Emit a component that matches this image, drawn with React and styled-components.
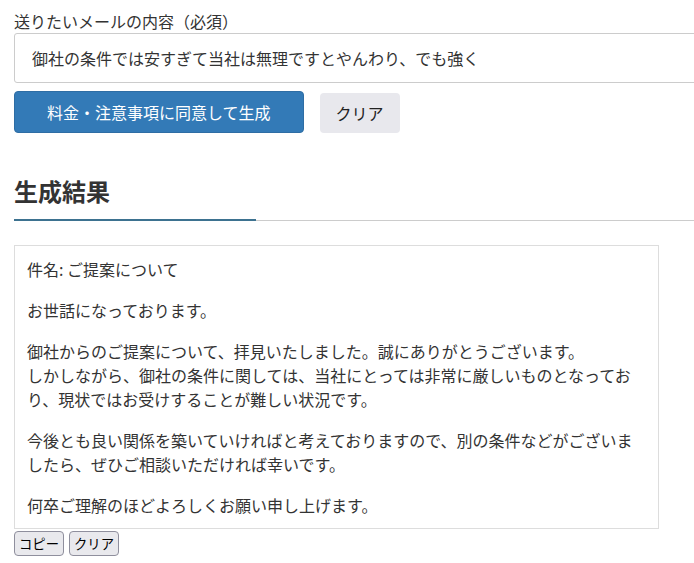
import React, { useState } from 'react'
import styled, { createGlobalStyle } from 'styled-components';

const GlobalStyle = createGlobalStyle`
    html, body {
        margin: 0;
        padding: 0;
        background: #fff;
        overflow: hidden;
    }

    body {
        font-family: "Noto Sans CJK JP", "Liberation Sans", sans-serif;
        color: #333;
        font-size: 16px;
    }
`;

const PageStyled = styled.div`
    padding: 9px 0 0 14px;
    width: 720px;
`;

const LabelStyled = styled.label`
    display: block;
    font-size: 16px;
    line-height: 24px;
`;

const InputStyled = styled.input`
    display: block;
    box-sizing: border-box;
    width: 100%;
    height: 50px;
    margin: 0;
    padding: 0 17px;
    border: 1px solid #ccc;
    border-radius: 3px;
    font-family: inherit;
    font-size: 16px;
    color: #333;
    outline: none;
`;

const ButtonRowStyled = styled.div`
    display: flex;
    align-items: flex-end;
    gap: 16px;
    margin-top: 8px;
`;

const ActionButton = styled.button`
    box-sizing: border-box;
    height: ${props => props.$primary ? '42px' : '40px'};
    padding: 0 ${props => props.$primary ? '32px' : '16px'};
    border: ${props => props.$primary ? '1px solid #2e6da4' : 'none'};
    border-radius: 4px;
    background: ${props => props.$primary ? '#337ab7' : '#e8e8ed'};
    color: ${props => props.$primary ? '#fff' : '#222'};
    font-family: inherit;
    font-size: 16px;
    cursor: pointer;
`;

const HeadingStyled = styled.h2`
    position: relative;
    margin: 40px 0 0;
    padding-bottom: 11px;
    border-bottom: 1px solid #ccc;
    font-size: 24px;
    font-weight: bold;
    line-height: 36px;
    color: #333;

    &::after {
        content: '';
        position: absolute;
        left: 0;
        bottom: -1px;
        width: 242px;
        height: 2px;
        background: #3d7290;
    }
`;

const ResultBoxStyled = styled.div`
    box-sizing: border-box;
    width: 645px;
    margin-top: 24px;
    padding: 11px 12px;
    border: 1px solid #ddd;
    font-size: 16px;
    line-height: 24px;
    color: #333;

    p {
        margin: 0 0 17px;
    }

    p:last-child {
        margin-bottom: 0;
    }
`;

const SmallButtonRowStyled = styled.div`
    display: flex;
    gap: 5px;
    margin-top: 2px;
`;

const SmallButton = styled.button`
    box-sizing: border-box;
    height: 25px;
    padding: 0 4px;
    border: 1px solid #8f8f9d;
    border-radius: 4px;
    background: #e9e9ed;
    color: #000;
    font-family: inherit;
    font-size: 13.33px;
    line-height: 1;
    cursor: pointer;
`;

const paragraphs = [
    ['件名: ご提案について'],
    ['お世話になっております。'],
    [
        '御社からのご提案について、拝見いたしました。誠にありがとうございます。',
        'しかしながら、御社の条件に関しては、当社にとっては非常に厳しいものとなっており、現状ではお受けすることが難しい状況です。',
    ],
    ['今後とも良い関係を築いていければと考えておりますので、別の条件などがございましたら、ぜひご相談いただければ幸いです。'],
    ['何卒ご理解のほどよろしくお願い申し上げます。'],
];

export default function App() {
    const [text, setText] = useState('御社の条件では安すぎて当社は無理ですとやんわり、でも強く');

    return (
        <>
            <GlobalStyle />
            <PageStyled>
                <LabelStyled htmlFor="mail">送りたいメールの内容（必須）</LabelStyled>
                <InputStyled id="mail" value={text} onChange={e => setText(e.target.value)} />
                <ButtonRowStyled>
                    <ActionButton $primary>料金・注意事項に同意して生成</ActionButton>
                    <ActionButton onClick={() => setText('')}>クリア</ActionButton>
                </ButtonRowStyled>

                <HeadingStyled>生成結果</HeadingStyled>
                <ResultBoxStyled>
                    {
                        paragraphs.map((lines, i) => (
                            <p key={i}>
                                {lines.map((line, j) => <React.Fragment key={j}>{j > 0 && <br />}{line}</React.Fragment>)}
                            </p>
                        ))
                    }
                </ResultBoxStyled>
                <SmallButtonRowStyled>
                    <SmallButton>コピー</SmallButton>
                    <SmallButton>クリア</SmallButton>
                </SmallButtonRowStyled>
            </PageStyled>
        </>
    )
}
